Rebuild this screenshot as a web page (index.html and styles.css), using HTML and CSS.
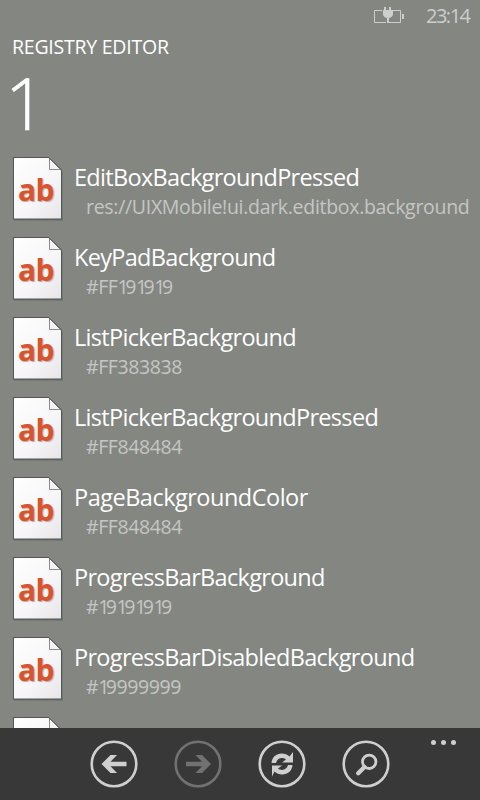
FILE: index.html
```
<!DOCTYPE html>
<html lang="en">
<head>
<meta charset="utf-8">
<title>Registry Editor</title>
<link rel="stylesheet" href="styles.css">
</head>
<body>
<svg width="0" height="0" class="defs" aria-hidden="true">
  <defs>
    <linearGradient id="paper" x1="0" y1="0" x2="1" y2="1">
      <stop offset="0" stop-color="#fff"/><stop offset=".55" stop-color="#f7f6f8"/><stop offset="1" stop-color="#e6e5e7"/>
    </linearGradient>
    <symbol id="page" viewBox="0 0 54 68">
      <path d="M4 4H39L52.500 16.500V66.500H4Z" fill="#6b6d69"/>
      <path d="M3 3H38.500L52 16V65.500H3Z" fill="#555753"/>
      <path d="M4 4H38.500L51 16.500V64.500H4Z" fill="url(#paper)"/>
      <path d="M39.500 4.500V15.500H50.500Z" fill="#f4f4f4" stroke="#8c8c8c"/>
      <path d="M39 4L51.500 16" stroke="#60625e" fill="none"/>
    </symbol>
  </defs>
</svg>
<div class="phone">
  <header class="status">
    <svg class="battery" width="32" height="18" viewBox="0 0 32 18" fill="none">
      <path d="M8 3.500H.500V15.500H12M19 3.500H26.500V15.500H15" stroke="#cdcecd"/>
      <path d="M28 7H30V12H28ZM10 0H12V3H15V0H17V3H19V7Q19 10 15 11V16H13V11Q9 10 9 7V3H10Z" fill="#cdcecd"/>
    </svg>
    <span class="clock">23:14</span>
  </header>
  <h1 class="app">REGISTRY EDITOR</h1>
  <div class="count">1</div>
  <ul class="list">
    <li class="row"><div class="icon"><svg width="54" height="68"><use href="#page"/></svg><b>ab</b></div><div><div class="name">EditBoxBackgroundPressed</div><div class="value path">res://UIXMobile!ui.dark.editbox.background</div></div></li>
    <li class="row"><div class="icon"><svg width="54" height="68"><use href="#page"/></svg><b>ab</b></div><div><div class="name">KeyPadBackground</div><div class="value">#FF<s>1</s>9<s>1</s>9<s>1</s>9</div></div></li>
    <li class="row"><div class="icon"><svg width="54" height="68"><use href="#page"/></svg><b>ab</b></div><div><div class="name">ListPickerBackground</div><div class="value">#FF383838</div></div></li>
    <li class="row"><div class="icon"><svg width="54" height="68"><use href="#page"/></svg><b>ab</b></div><div><div class="name">ListPickerBackgroundPressed</div><div class="value">#FF848484</div></div></li>
    <li class="row"><div class="icon"><svg width="54" height="68"><use href="#page"/></svg><b>ab</b></div><div><div class="name wide">PageBackgroundColor</div><div class="value">#FF848484</div></div></li>
    <li class="row"><div class="icon"><svg width="54" height="68"><use href="#page"/></svg><b>ab</b></div><div><div class="name">ProgressBarBackground</div><div class="value">#<s>1</s>9<s>1</s>9<s>1</s>9<s>1</s>9</div></div></li>
    <li class="row"><div class="icon"><svg width="54" height="68"><use href="#page"/></svg><b>ab</b></div><div><div class="name">ProgressBarDisabledBackground</div><div class="value">#<s>1</s>9999999</div></div></li>
    <li class="row"><div class="icon"><svg width="54" height="68"><use href="#page"/></svg></div><div><div class="name">RadioButtonBackgroundPressed</div></div></li>
  </ul>
  <footer class="bar">
    <svg class="btn" width="48" height="48" viewBox="0 0 48 48">
      <circle cx="24" cy="24" r="22.300"/><path class="fill" d="M11.500 24L20.500 15H27L20.500 21.700H36.500V26.300H20.500L27 33H20.500Z"/>
    </svg>
    <svg class="btn off" width="48" height="48" viewBox="0 0 48 48">
      <circle cx="24" cy="24" r="22.300"/><path class="fill" d="M37 24L28 15H21.500L28 21.700H12V26.300H28L21.500 33H28Z"/>
    </svg>
    <svg class="btn" width="48" height="48" viewBox="0 0 48 48">
      <circle cx="24" cy="24" r="22.300"/>
      <path class="fill" d="M13.500 23C14 17 18.500 13.500 23.500 13.500C27 13.500 29.500 14.700 31.500 16.500L35 12V22.500H24L28 19.500C24 16.500 19 18.500 18 23ZM34.500 25C34 31 29.500 34.500 24.500 34.500C21 34.500 18.500 33.300 16.500 31.500L14 36.500V25.500H24L20 28.500C24 31.500 29 29.500 30 25Z"/>
    </svg>
    <svg class="btn" width="48" height="48" viewBox="0 0 48 48">
      <circle cx="24" cy="24" r="22.300"/><circle class="lens" cx="27.200" cy="21.800" r="6.700"/><path class="handle" d="M22.500 27L16.200 33.200"/>
    </svg>
    <div class="more"><i></i><i></i><i></i></div>
  </footer>
</div>
</body>
</html>
```
FILE: styles.css
```
* { box-sizing: border-box; }
body { margin: 0; background: #848682; font-family: "Open Sans", "Noto Sans", sans-serif; color: #fff; }
.defs { position: absolute; }
.phone { width: 480px; height: 800px; overflow: hidden; display: flex; flex-direction: column; background: #848682; white-space: nowrap; }
.status { height: 32px; flex: none; display: flex; justify-content: flex-end; align-items: flex-start; padding: 7px 9px 0 0; color: #cdcecd; }
.clock { width: 45px; margin-left: 20px; font-size: 20px; line-height: 18px; letter-spacing: -1.500px; }
.app { margin: 0; padding-left: 12px; height: 30px; flex: none; font-size: 19.500px; line-height: 30px; font-weight: 400; letter-spacing: -.240px; }
.count { height: 90px; flex: none; padding-left: 5px; font-size: 72px; line-height: 80px; font-weight: 300; -webkit-text-stroke: .6px #fff; }
.list { list-style: none; margin: 0; padding: 2px 0 0 10px; height: 576px; flex: none; overflow: hidden; }
.row { height: 80px; display: flex; }
.icon { width: 64px; height: 80px; display: grid; flex: none; }
.icon svg, .icon b { grid-area: 1 / 1; }
.icon b { padding: 19px 0 0 8px; font-size: 30px; line-height: 34px; letter-spacing: -.600px; color: #d9532f; text-shadow: 1px 1px 1px #b9aaa7; }
.name { height: 38px; padding-top: 6px; font-size: 23.500px; line-height: 34px; letter-spacing: -.690px; }
.wide { letter-spacing: -.500px; }
.value { padding: 2px 0 0 12px; font-size: 19.500px; line-height: 26px; color: #c5c7c4; letter-spacing: -.400px; }
.path { letter-spacing: -.300px; }
.value s { text-decoration: none; letter-spacing: -3.500px; }
.bar { height: 72px; flex: none; background: #383838; display: flex; padding: 12px 24px 0 90px; gap: 36px; }
.btn { flex: none; fill: none; stroke: #cfcfcf; stroke-width: 2.600; }
.btn .fill { fill: #cfcfcf; stroke: none; }
.off { opacity: .38; }
.lens { stroke-width: 2.800; }
.handle { stroke-width: 4.400; stroke-linecap: round; }
.more { display: flex; gap: 5px; margin-left: 5px; }
.more i { width: 5px; height: 5px; border-radius: 50%; background: #cfcfcf; }
```
